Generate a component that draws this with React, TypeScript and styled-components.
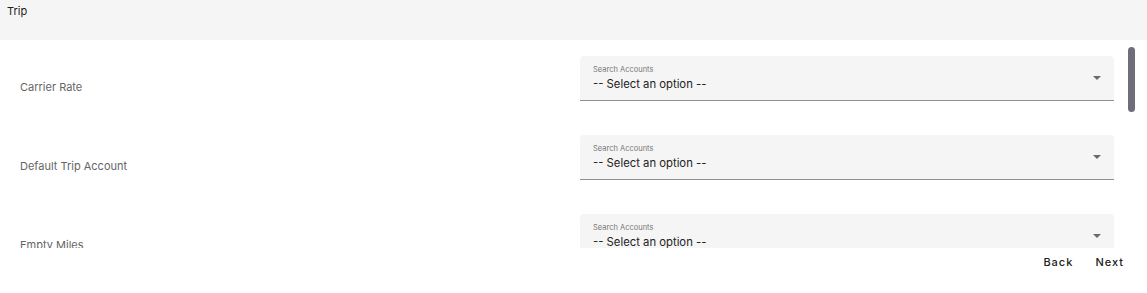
import styled, { createGlobalStyle } from 'styled-components'

const GlobalStyle = createGlobalStyle`
  html, body {
    margin: 0;
    padding: 0;
    background: #ffffff;
    font-family: Inter, "Noto Sans", sans-serif;
  }
`

const fields = [
  'Carrier Rate',
  'Default Trip Account',
  'Empty Miles',
  'Fuel Surcharge',
  'Loaded Miles',
  'Detention',
  'Layover',
  'Lumper',
]

const Caret = () => (
  <svg width="8" height="4" viewBox="0 0 8 4">
    <path d="M0 0 L8 0 L4 4 Z" fill="#6a6a6a" />
  </svg>
)

const App = () => {
  return (
    <Page>
      <GlobalStyle />
      <Header>Trip</Header>
      <Body>
        <ScrollArea>
          {fields.map((name) => (
            <Row key={name}>
              <Label>{name}</Label>
              <Field>
                <FieldText>
                  <FieldLabel>Search Accounts</FieldLabel>
                  <FieldValue>-- Select an option --</FieldValue>
                </FieldText>
                <Caret />
              </Field>
            </Row>
          ))}
        </ScrollArea>
        <ScrollTrack>
          <ScrollThumb />
        </ScrollTrack>
      </Body>
      <Footer>
        <TextButton>Back</TextButton>
        <TextButton>Next</TextButton>
      </Footer>
    </Page>
  )
}

const Page = styled.div`
  width: 1147px;
  height: 293px;
  display: flex;
  flex-direction: column;
  overflow: hidden;
`
const Header = styled.div`
  height: 40px;
  box-sizing: border-box;
  background: #f5f5f5;
  padding: 4px 7px;
  font-size: 11px;
  line-height: 14px;
  color: #222;
`
const Body = styled.div`
  height: 208px;
  display: flex;
`
const ScrollArea = styled.div`
  flex: 1;
  overflow: hidden;
  box-sizing: border-box;
  padding-top: 16px;
`
const ScrollTrack = styled.div`
  width: 7px;
  margin-right: 12px;
  padding-top: 7px;
`
const ScrollThumb = styled.div`
  height: 65px;
  background: #6e6d7a;
  border-radius: 4px;
`
const Row = styled.div`
  display: grid;
  grid-template-columns: 1fr 534px;
  padding: 0 14px 0 20px;
  margin-bottom: 34px;
`
const Label = styled.div`
  padding-top: 24px;
  font-size: 11px;
  line-height: 14px;
  color: #666;
`
const Field = styled.div`
  height: 45px;
  box-sizing: border-box;
  background: #f5f5f5;
  border-bottom: 1px solid #8f8f8f;
  border-radius: 4px 4px 0 0;
  display: flex;
  align-items: center;
  justify-content: space-between;
  padding: 0 13px 0 13px;
`
const FieldText = styled.div`
  display: flex;
  flex-direction: column;
`
const FieldLabel = styled.div`
  font-size: 7.5px;
  line-height: 10px;
  color: #777;
`
const FieldValue = styled.div`
  font-size: 11.3px;
  line-height: 16px;
  color: #222;
  margin-top: 1px;
`
const Footer = styled.div`
  flex: 1;
  display: flex;
  justify-content: flex-end;
  align-items: flex-start;
  padding: 5px 15px 0 0;
  gap: 6px;
`
const TextButton = styled.button`
  background: none;
  border: none;
  font-family: Inter, "Noto Sans", sans-serif;
  font-size: 11px;
  font-weight: 500;
  letter-spacing: 1px;
  color: #222;
  padding: 2px 8px;
  line-height: 14px;
  cursor: pointer;
`

export default App
